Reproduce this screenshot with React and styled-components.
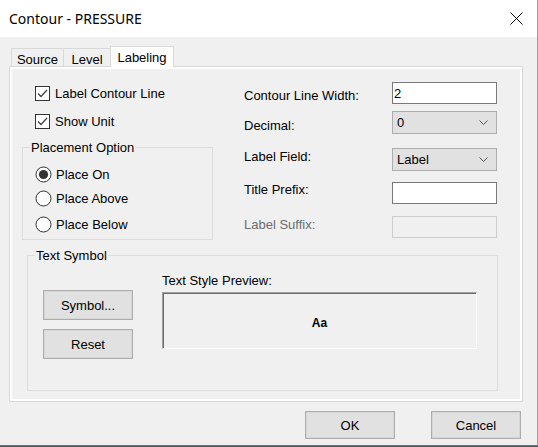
import React from 'react';
import styled, { createGlobalStyle, css } from 'styled-components';

const GlobalStyle = createGlobalStyle`
  html, body { margin: 0; padding: 0; background: #4b5a60; }
  body { font-family: 'Liberation Sans', Arial, sans-serif; font-size: 13px; color: #000; }
  #root { width: 538px; height: 447px; }
`;

const Window = styled.div`
  width: 538px;
  height: 446px;
  box-sizing: border-box;
  background: #f0f0f0;
  border-right: 1px solid #9c9c9c;
  border-bottom: 1px solid #707070;
  display: flex;
  flex-direction: column;
`;

const TitleBar = styled.div`
  height: 37px;
  flex: none;
  background: #fff;
  display: flex;
  align-items: center;
  justify-content: space-between;
  padding-left: 9px;
`;

const Title = styled.span`
  font-family: 'Noto Sans', 'Open Sans', sans-serif;
  font-size: 14px;
  line-height: 18px;
  color: #000;
`;

const CloseIcon = styled.svg`
  margin-right: 14px;
  display: block;
`;

const Body = styled.div`
  padding: 9px 0 0 9px;
  display: flex;
  flex-direction: column;
`;

const TabStrip = styled.div`
  height: 20px;
  display: flex;
  align-items: flex-end;
  padding-left: 2px;
  position: relative;
  z-index: 1;
`;

const Tab = styled.div`
  box-sizing: border-box;
  width: ${p => p.$w}px;
  border: 1px solid #d9d9d9;
  border-bottom: none;
  display: flex;
  justify-content: center;
  line-height: 15px;
  & + & { margin-left: -1px; }
  ${p => p.$active
    ? css`
        height: 21px;
        margin-bottom: -1px;
        background: #fff;
        padding-top: 3px;
        position: relative;
        z-index: 2;
      `
    : css`
        height: 18px;
        background: #f0f0f0;
        padding-top: 3px;
      `}
`;

const Panel = styled.div`
  box-sizing: border-box;
  width: 514px;
  height: 336px;
  border: 1px solid #d9d9d9;
  box-shadow: inset 0 0 0 2px #fff;
  padding: 15px 0 0 12px;
  display: flex;
  flex-direction: column;
`;

const TopArea = styled.div`
  display: grid;
  grid-template-columns: 191px 253px;
  column-gap: 31px;
  align-items: start;
`;

const Column = styled.div`
  display: flex;
  flex-direction: column;
`;

const CheckRow = styled.label`
  height: 22px;
  display: flex;
  align-items: center;
  gap: 5px;
  padding-left: 13px;
  margin-top: ${p => p.$mt || 0}px;
  line-height: 15px;
`;

const CheckBox = styled.span`
  box-sizing: border-box;
  width: 15px;
  height: 15px;
  border: 1px solid #333;
  background: #fff;
  display: flex;
  align-items: center;
  justify-content: center;
`;

const GroupBox = styled.fieldset`
  margin: ${p => p.$mt || 0}px 0 0 ${p => p.$ml || 0}px;
  padding: 0;
  border: 1px solid #dcdcdc;
  min-width: 0;
  ${p => p.$w && css`width: ${p.$w}px; box-sizing: border-box;`}
`;

const Legend = styled.legend`
  margin-left: 7px;
  padding: 0 1px;
  line-height: 15px;
  font-size: 13px;
`;

const RadioList = styled.div`
  display: flex;
  flex-direction: column;
  padding: 9px 0 5px 12px;
`;

const RadioRow = styled.label`
  height: 20px;
  display: flex;
  align-items: center;
  gap: 4px;
  margin-top: ${p => p.$mt || 0}px;
  line-height: 15px;
`;

const FieldRow = styled.div`
  display: grid;
  grid-template-columns: 148px 105px;
  align-items: start;
  margin-top: ${p => p.$mt || 0}px;
`;

const FieldLabel = styled.span`
  line-height: 15px;
  padding-top: ${p => p.$dy || 0}px;
  color: ${p => (p.$disabled ? '#6d6d6d' : '#000')};
`;

const TextInput = styled.div`
  box-sizing: border-box;
  height: 22px;
  border: 1px solid ${p => (p.$disabled ? '#cccccc' : '#7a7a7a')};
  background: ${p => (p.$disabled ? '#f0f0f0' : '#fff')};
  padding-left: 1px;
  display: flex;
  align-items: center;
  line-height: 15px;
`;

const Select = styled.div`
  box-sizing: border-box;
  height: 23px;
  border: 1px solid #adadad;
  background: #e1e1e1;
  display: flex;
  align-items: center;
  justify-content: space-between;
  padding: 0 8px 0 4px;
  line-height: 15px;
`;

const TextSymbolBody = styled.div`
  display: grid;
  grid-template-columns: 90px 315px;
  column-gap: 29px;
  padding: 10px 0 31px 15px;
  align-items: start;
`;

const ButtonStack = styled.div`
  display: flex;
  flex-direction: column;
  gap: 9px;
  margin-top: 17px;
`;

const Button = styled.button`
  box-sizing: border-box;
  width: 90px;
  height: ${p => p.$h || 30}px;
  border: 1px solid #adadad;
  box-shadow: inset 0 0 0 1px #d6d6d6;
  background: #e1e1e1;
  font-family: 'Liberation Sans', Arial, sans-serif;
  font-size: 13px;
  color: #000;
  padding: 0;
  display: flex;
  align-items: center;
  justify-content: center;
`;

const PreviewLabel = styled.div`
  line-height: 15px;
`;

const PreviewBox = styled.div`
  box-sizing: border-box;
  margin-top: 4px;
  height: 57px;
  border: 1px solid;
  border-color: #a0a0a0 #fff #fff #a0a0a0;
  box-shadow: inset 1px 1px 0 #6e6e6e;
  background: #f0f0f0;
  display: flex;
  align-items: center;
  justify-content: center;
  font-weight: bold;
  font-size: 12px;
  padding-top: 4px;
`;

const Footer = styled.div`
  display: flex;
  justify-content: flex-end;
  gap: 36px;
  margin-top: 9px;
  padding-right: 16px;
`;

const Check = () => (
  <svg width="13" height="13" viewBox="0 0 13 13">
    <polyline points="2,6.5 5,9.5 11,3" fill="none" stroke="#444" strokeWidth="1.3" />
  </svg>
);

const Radio = ({ checked }) => (
  <svg width="17" height="17" viewBox="0 0 17 17">
    <circle cx="8.5" cy="8.5" r="7.5" fill="#fff" stroke="#333" strokeWidth="1" />
    {checked && <circle cx="8.5" cy="8.5" r="4.6" fill="#333" />}
  </svg>
);

const Chevron = () => (
  <svg width="9" height="5" viewBox="0 0 9 5">
    <polyline points="0.5,0.5 4.5,4.5 8.5,0.5" fill="none" stroke="#555" strokeWidth="1" />
  </svg>
);

export default function App() {
  return (
    <>
      <GlobalStyle />
      <Window>
        <TitleBar>
          <Title>Contour - PRESSURE</Title>
          <CloseIcon width="13" height="13" viewBox="0 0 13 13">
            <path d="M0.5 0.5 L12.5 12.5 M12.5 0.5 L0.5 12.5" stroke="#000" strokeWidth="1" />
          </CloseIcon>
        </TitleBar>
        <Body>
          <TabStrip>
            <Tab $w={53}>Source</Tab>
            <Tab $w={48}>Level</Tab>
            <Tab $w={64} $active>Labeling</Tab>
          </TabStrip>
          <Panel>
            <TopArea>
              <Column>
                <CheckRow>
                  <CheckBox><Check /></CheckBox>
                  Label Contour Line
                </CheckRow>
                <CheckRow $mt={6}>
                  <CheckBox><Check /></CheckBox>
                  Show Unit
                </CheckRow>
                <GroupBox $mt={8}>
                  <Legend>Placement Option</Legend>
                  <RadioList>
                    <RadioRow><Radio checked />Place On</RadioRow>
                    <RadioRow $mt={4}><Radio />Place Above</RadioRow>
                    <RadioRow $mt={6}><Radio />Place Below</RadioRow>
                  </RadioList>
                </GroupBox>
              </Column>
              <Column>
                <FieldRow>
                  <FieldLabel $dy={5.5}>Contour Line Width:</FieldLabel>
                  <TextInput>2</TextInput>
                </FieldRow>
                <FieldRow $mt={7}>
                  <FieldLabel $dy={6.5}>Decimal:</FieldLabel>
                  <Select><span>0</span><Chevron /></Select>
                </FieldRow>
                <FieldRow $mt={14}>
                  <FieldLabel $dy={0.5}>Label Field:</FieldLabel>
                  <Select><span>Label</span><Chevron /></Select>
                </FieldRow>
                <FieldRow $mt={11}>
                  <FieldLabel $dy={0}>Title Prefix:</FieldLabel>
                  <TextInput />
                </FieldRow>
                <FieldRow $mt={12}>
                  <FieldLabel $dy={0.5} $disabled>Label Suffix:</FieldLabel>
                  <TextInput $disabled />
                </FieldRow>
              </Column>
            </TopArea>
            <GroupBox $mt={8} $ml={5} $w={471}>
              <Legend>Text Symbol</Legend>
              <TextSymbolBody>
                <ButtonStack>
                  <Button>Symbol...</Button>
                  <Button>Reset</Button>
                </ButtonStack>
                <div>
                  <PreviewLabel>Text Style Preview:</PreviewLabel>
                  <PreviewBox>Aa</PreviewBox>
                </div>
              </TextSymbolBody>
            </GroupBox>
          </Panel>
          <Footer>
            <Button $h={28}>OK</Button>
            <Button $h={28}>Cancel</Button>
          </Footer>
        </Body>
      </Window>
    </>
  );
}
